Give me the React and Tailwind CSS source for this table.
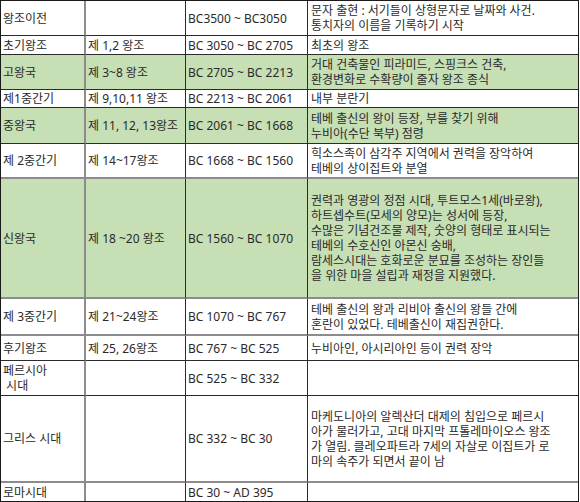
const rows = [
  {
    h: 'h-[35px]',
    era: ['왕조이전'],
    dyn: '',
    date: 'BC3500 ~ BC3050',
    desc: ['문자 출현 : 서기들이 상형문자로 날짜와 사건.', '통치자의 이름을 기록하기 시작'],
  },
  { h: 'h-[19px]', era: ['초기왕조'], dyn: '제 1,2 왕조', date: 'BC 3050 ~ BC 2705', desc: ['최초의 왕조'] },
  {
    h: 'h-[35px]',
    green: true,
    era: ['고왕국'],
    dyn: '제 3~8 왕조',
    date: 'BC 2705 ~ BC 2213',
    desc: ['거대 건축물인 피라미드, 스핑크스 건축,', '환경변화로 수확량이 줄자 왕조 종식'],
  },
  { h: 'h-[18px]', era: ['제1중간기'], dyn: '제 9,10,11 왕조', date: 'BC 2213 ~ BC 2061', desc: ['내부 분란기'] },
  {
    h: 'h-[36px]',
    green: true,
    era: ['중왕국'],
    dyn: '제 11, 12, 13왕조',
    date: 'BC 2061 ~ BC 1668',
    desc: ['테베 출신의 왕이 등장, 부를 찾기 위해', '누비아(수단 북부) 점령'],
  },
  {
    h: 'h-[35px]',
    grayLine: true,
    era: ['제 2중간기'],
    dyn: '제 14~17왕조',
    date: 'BC 1668 ~ BC 1560',
    desc: ['힉소스족이 삼각주 지역에서 권력을 장악하여', '테베의 상이집트와 분열'],
  },
  {
    h: 'h-[120px]',
    green: true,
    grayLine: true,
    era: ['신왕국'],
    dyn: '제 18 ~20 왕조',
    date: 'BC 1560 ~ BC 1070',
    desc: [
      '권력과 영광의 정점 시대, 투트모스1세(바로왕),',
      '하트셉수트(모세의 양모)는 성서에 등장,',
      '수많은 기념건조물 제작, 숫양의 형태로 표시되는',
      '테베의 수호신인 아몬신 숭배,',
      '람세스시대는 호화로운 분묘를 조성하는 장인들',
      '을 위한 마을 설립과 재정을 지원했다.',
    ],
  },
  {
    h: 'h-[37px]',
    grayLine: true,
    era: ['제 3중간기'],
    dyn: '제 21~24왕조',
    date: 'BC 1070 ~ BC 767',
    desc: ['테베 출신의 왕과 리비아 출신의 왕들 간에', '혼란이 있었다. 테베출신이 재집권한다.'],
  },
  { h: 'h-[25px]', era: ['후기왕조'], dyn: '제 25, 26왕조', date: 'BC 767 ~ BC 525', desc: ['누비아인, 아시리아인 등이 권력 장악'] },
  { h: 'h-[35px]', era: ['페르시아', '\u00a0시대'], dyn: '', date: 'BC 525 ~ BC 332', desc: [] },
  {
    h: 'h-[87px]',
    grayLine: true,
    era: ['그리스 시대'],
    dyn: '',
    date: 'BC 332 ~ BC 30',
    desc: [
      '마케도니아의 알렉산더 대제의 침입으로 페르시',
      '아가 물러가고, 고대 마지막 프톨레마이오스 왕조',
      '가 열림. 클레오파트라 7세의 자살로 이집트가 로',
      '마의 속주가 되면서 끝이 남',
    ],
  },
  { h: 'h-[18px]', last: true, era: ['로마시대'], dyn: '', date: 'BC 30 ~ AD 395', desc: [] },
];

const Cell = ({ row, className, children }) => {
  const bottom = row.last ? '' : row.grayLine ? 'border-b-2 border-b-[#8c8c8c]' : 'border-b border-b-[#2b2b2b]';
  return (
    <div
      className={`flex flex-col justify-center px-[2px] whitespace-nowrap leading-[15px] ${row.h} ${bottom} ${
        row.green ? 'bg-[#c6dfb5]' : 'bg-white'
      } ${className}`}
    >
      {children}
    </div>
  );
};

export default function App() {
  return (
    <div className="bg-white w-[580px] h-[502px]">
      <div
        className="w-[579px] grid grid-cols-[85px_100px_122px_1fr] border border-[#1a1a1a] border-b-2 text-[12px] text-[#2a2a2a]"
        style={{ fontFamily: '"Noto Sans", "Noto Sans CJK KR", sans-serif' }}
      >
        {rows.map((row, i) => (
          <div key={i} className="contents">
            <Cell row={row} className="border-r-2 border-r-[#8c8c8c]">
              {row.era.map((t, j) => (
                <div key={j}>{t}</div>
              ))}
            </Cell>
            <Cell row={row} className="border-r border-r-[#2b2b2b]">
              <div>{row.dyn}</div>
            </Cell>
            <Cell row={row} className="border-r border-r-[#2b2b2b]">
              <div>{row.date}</div>
            </Cell>
            <Cell row={row} className="pl-[3px]">
              {row.desc.map((t, j) => (
                <div key={j}>{t}</div>
              ))}
            </Cell>
          </div>
        ))}
      </div>
    </div>
  );
}
